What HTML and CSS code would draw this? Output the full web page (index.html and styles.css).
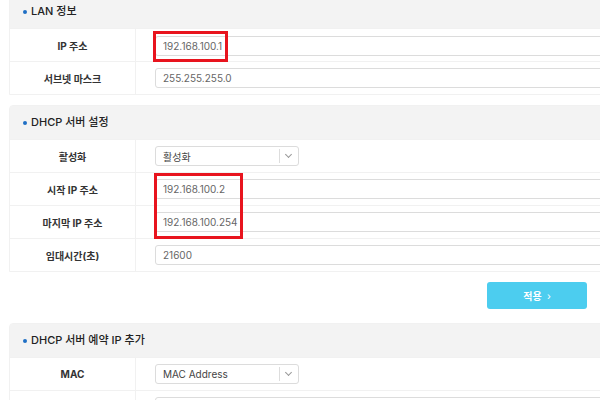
FILE: index.html
```html
<!DOCTYPE html>
<html lang="ko">
<head>
    <meta charset="UTF-8">
    <title>LAN 설정</title>
    <link rel="stylesheet" href="styles.css">
</head>
<body>
    <div class="wrap">
        <div class="panel first">
            <div class="panel-head">LAN 정보</div>
            <div class="row">
                <div class="label">IP 주소</div>
                <div class="value">
                    <div class="mark"><input type="text" class="field" value="192.168.100.1"></div>
                </div>
            </div>
            <div class="row">
                <div class="label">서브넷 마스크</div>
                <div class="value"><input type="text" class="field" value="255.255.255.0"></div>
            </div>
        </div>

        <div class="panel">
            <div class="panel-head">DHCP 서버 설정</div>
            <div class="row">
                <div class="label">활성화</div>
                <div class="value">
                    <div class="select"><span>활성화</span><i class="arrow"></i></div>
                </div>
            </div>
            <div class="mark-group">
                <div class="row">
                    <div class="label">시작 IP 주소</div>
                    <div class="value"><input type="text" class="field" value="192.168.100.2"></div>
                </div>
                <div class="row">
                    <div class="label">마지막 IP 주소</div>
                    <div class="value"><input type="text" class="field" value="192.168.100.254"></div>
                </div>
                <div class="mark-box"></div>
            </div>
            <div class="row">
                <div class="label">임대시간(초)</div>
                <div class="value"><input type="text" class="field" value="21600"></div>
            </div>
        </div>

        <div class="btns">
            <button class="apply">적용 <span class="chev">›</span></button>
        </div>

        <div class="panel">
            <div class="panel-head">DHCP 서버 예약 IP 추가</div>
            <div class="row">
                <div class="label">MAC</div>
                <div class="value">
                    <div class="select"><span>MAC Address</span><i class="arrow"></i></div>
                </div>
            </div>
            <div class="row">
                <div class="label"></div>
                <div class="value"><input type="text" class="field" value=""></div>
            </div>
        </div>
    </div>
</body>
</html>
```

FILE: styles.css
```css
*{margin: 0;padding: 0;box-sizing: border-box;}
body{background: #fff;overflow: hidden;font-family: "Inter", "Noto Sans CJK KR", sans-serif;color: #333;}

.wrap{width: 760px;margin-left: 9px;}
.panel{border: 1px solid #f1f1f1;border-radius: 4px 0 0 0;margin-bottom: 10px;}
.panel.first{margin-top: -6px;}
.panel-head{height: 33px;background: #f3f3f3;font-size: 11px;font-weight: 500;line-height: 33px;padding-left: 21px;position: relative;color: #222;}
.panel-head:before{content: "";position: absolute;left: 13px;top: 15px;width: 4px;height: 4px;border-radius: 50%;background: #1f6fc5;}

.row{display: flex;height: 33px;border-top: 1px solid #f1f1f1;}
.label{width: 126px;border-right: 1px solid #f1f1f1;font-size: 10px;font-weight: 700;display: flex;align-items: center;justify-content: center;color: #333;}
.value{flex: 1;display: flex;align-items: center;padding-left: 19px;}

.field{width: 560px;height: 20px;border: 1px solid #dcdcdc;border-radius: 3px;font-family: inherit;font-size: 10px;color: #666;padding-left: 7px;outline: none;}

.select{width: 144px;height: 20px;border: 1px solid #dcdcdc;border-radius: 3px;display: flex;align-items: center;font-size: 10px;color: #444;padding-left: 7px;position: relative;}
.select span{flex: 1;}
.select .arrow{width: 19px;height: 14px;border-left: 1px solid #ddd;position: relative;}
.select .arrow:after{content: "";position: absolute;left: 6px;top: 3px;width: 4px;height: 4px;border-right: 1px solid #999;border-bottom: 1px solid #999;transform: rotate(45deg);}

.mark{position: relative;}
.mark:after{content: "";position: absolute;left: -2px;top: -3px;width: 69px;height: 25px;border: 3px solid #e8141e;}
.mark-group{position: relative;}
.mark-box{position: absolute;left: 144px;top: 1px;width: 89px;height: 66px;border: 3px solid #e8141e;}

.btns{width: 578px;display: flex;justify-content: flex-end;margin-bottom: 14px;}
.apply{width: 100px;height: 27px;border: none;border-radius: 3px;background: #4ccdef;color: #fff;font-family: inherit;font-size: 10px;font-weight: 700;}
.chev{font-weight: 400;margin-left: 3px;}
```
